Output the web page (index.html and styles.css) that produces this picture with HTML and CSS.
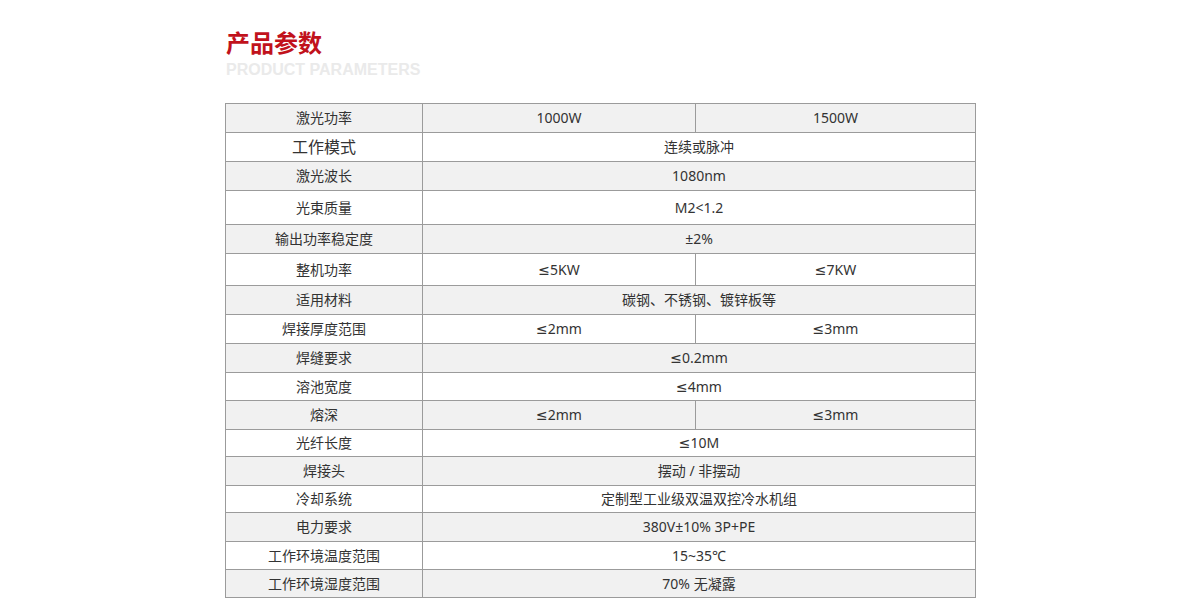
FILE: index.html
```html
<!DOCTYPE html>
<html lang="zh-CN">
<head>
<meta charset="utf-8">
<title>产品参数</title>
<link rel="stylesheet" href="styles.css">
</head>
<body>
<div class="wrap">
  <div class="head">
    <h2 class="title">产品参数</h2>
    <div class="sub">PRODUCT PARAMETERS</div>
  </div>
  <table class="params">
    <colgroup><col class="c1"><col class="c2"><col class="c3"></colgroup>
    <tr class="h29"><td>激光功率</td><td>1000W</td><td>1500W</td></tr>
    <tr class="h29"><td class="big">工作模式</td><td colspan="2">连续或脉冲</td></tr>
    <tr class="h29"><td>激光波长</td><td colspan="2">1080nm</td></tr>
    <tr class="h34"><td>光束质量</td><td colspan="2">M2&lt;1.2</td></tr>
    <tr class="h29"><td>输出功率稳定度</td><td colspan="2">±2%</td></tr>
    <tr class="h32"><td>整机功率</td><td>≤5KW</td><td>≤7KW</td></tr>
    <tr class="h29"><td>适用材料</td><td colspan="2">碳钢、不锈钢、镀锌板等</td></tr>
    <tr class="h29"><td>焊接厚度范围</td><td>≤2mm</td><td>≤3mm</td></tr>
    <tr class="h29"><td>焊缝要求</td><td colspan="2">≤0.2mm</td></tr>
    <tr class="h28"><td>溶池宽度</td><td colspan="2">≤4mm</td></tr>
    <tr class="h29"><td>熔深</td><td>≤2mm</td><td>≤3mm</td></tr>
    <tr class="h27"><td>光纤长度</td><td colspan="2">≤10M</td></tr>
    <tr class="h29"><td>焊接头</td><td colspan="2">摆动 / 非摆动</td></tr>
    <tr class="h27"><td>冷却系统</td><td colspan="2">定制型工业级双温双控冷水机组</td></tr>
    <tr class="h29"><td>电力要求</td><td colspan="2">380V±10% 3P+PE</td></tr>
    <tr class="h28"><td>工作环境温度范围</td><td colspan="2">15~35℃</td></tr>
    <tr class="h28"><td>工作环境湿度范围</td><td colspan="2">70% 无凝露</td></tr>
  </table>
</div>
</body>
</html>
```

FILE: styles.css
```css
html, body {
  margin: 0;
  padding: 0;
  background: #fff;
}
body {
  font-family: "Noto Sans", "DejaVu Sans", "Noto Sans CJK SC", sans-serif;
  color: #333;
}
.wrap {
  width: 750px;
  margin: 0 auto;
}
.head {
  padding-top: 26px;
  padding-left: 1px;
  height: 77px;
  box-sizing: border-box;
}
.title {
  margin: 0;
  font-family: "Noto Sans CJK SC", sans-serif;
  font-size: 24px;
  font-weight: 700;
  line-height: 32px;
  color: #c1121c;
}
.sub {
  margin-top: 2px;
  font-family: "Liberation Sans", Arial, sans-serif;
  font-size: 16px;
  font-weight: 700;
  line-height: 20px;
  color: #eaeaea;
}
.params {
  width: 750px;
  border-collapse: collapse;
  margin-top: 26px;
  table-layout: fixed;
}
.c1 { width: 197px; }
.c2 { width: 273px; }
.c3 { width: 280px; }
.params td {
  border: 1px solid #9b9b9b;
  padding: 0;
  text-align: center;
  vertical-align: middle;
  font-size: 14px;
  line-height: 18px;
  color: #333;
  font-family: "Noto Sans", "DejaVu Sans", "Noto Sans CJK SC", sans-serif;
}
.params td.big { font-size: 16px; }
.params tr:nth-child(odd) td { background: #f1f1f1; }
.params tr:nth-child(even) td { background: #fff; }
.h27 { height: 27px; }
.h28 { height: 28px; }
.h29 { height: 29px; }
.h32 { height: 32px; }
.h34 { height: 34px; }
```
